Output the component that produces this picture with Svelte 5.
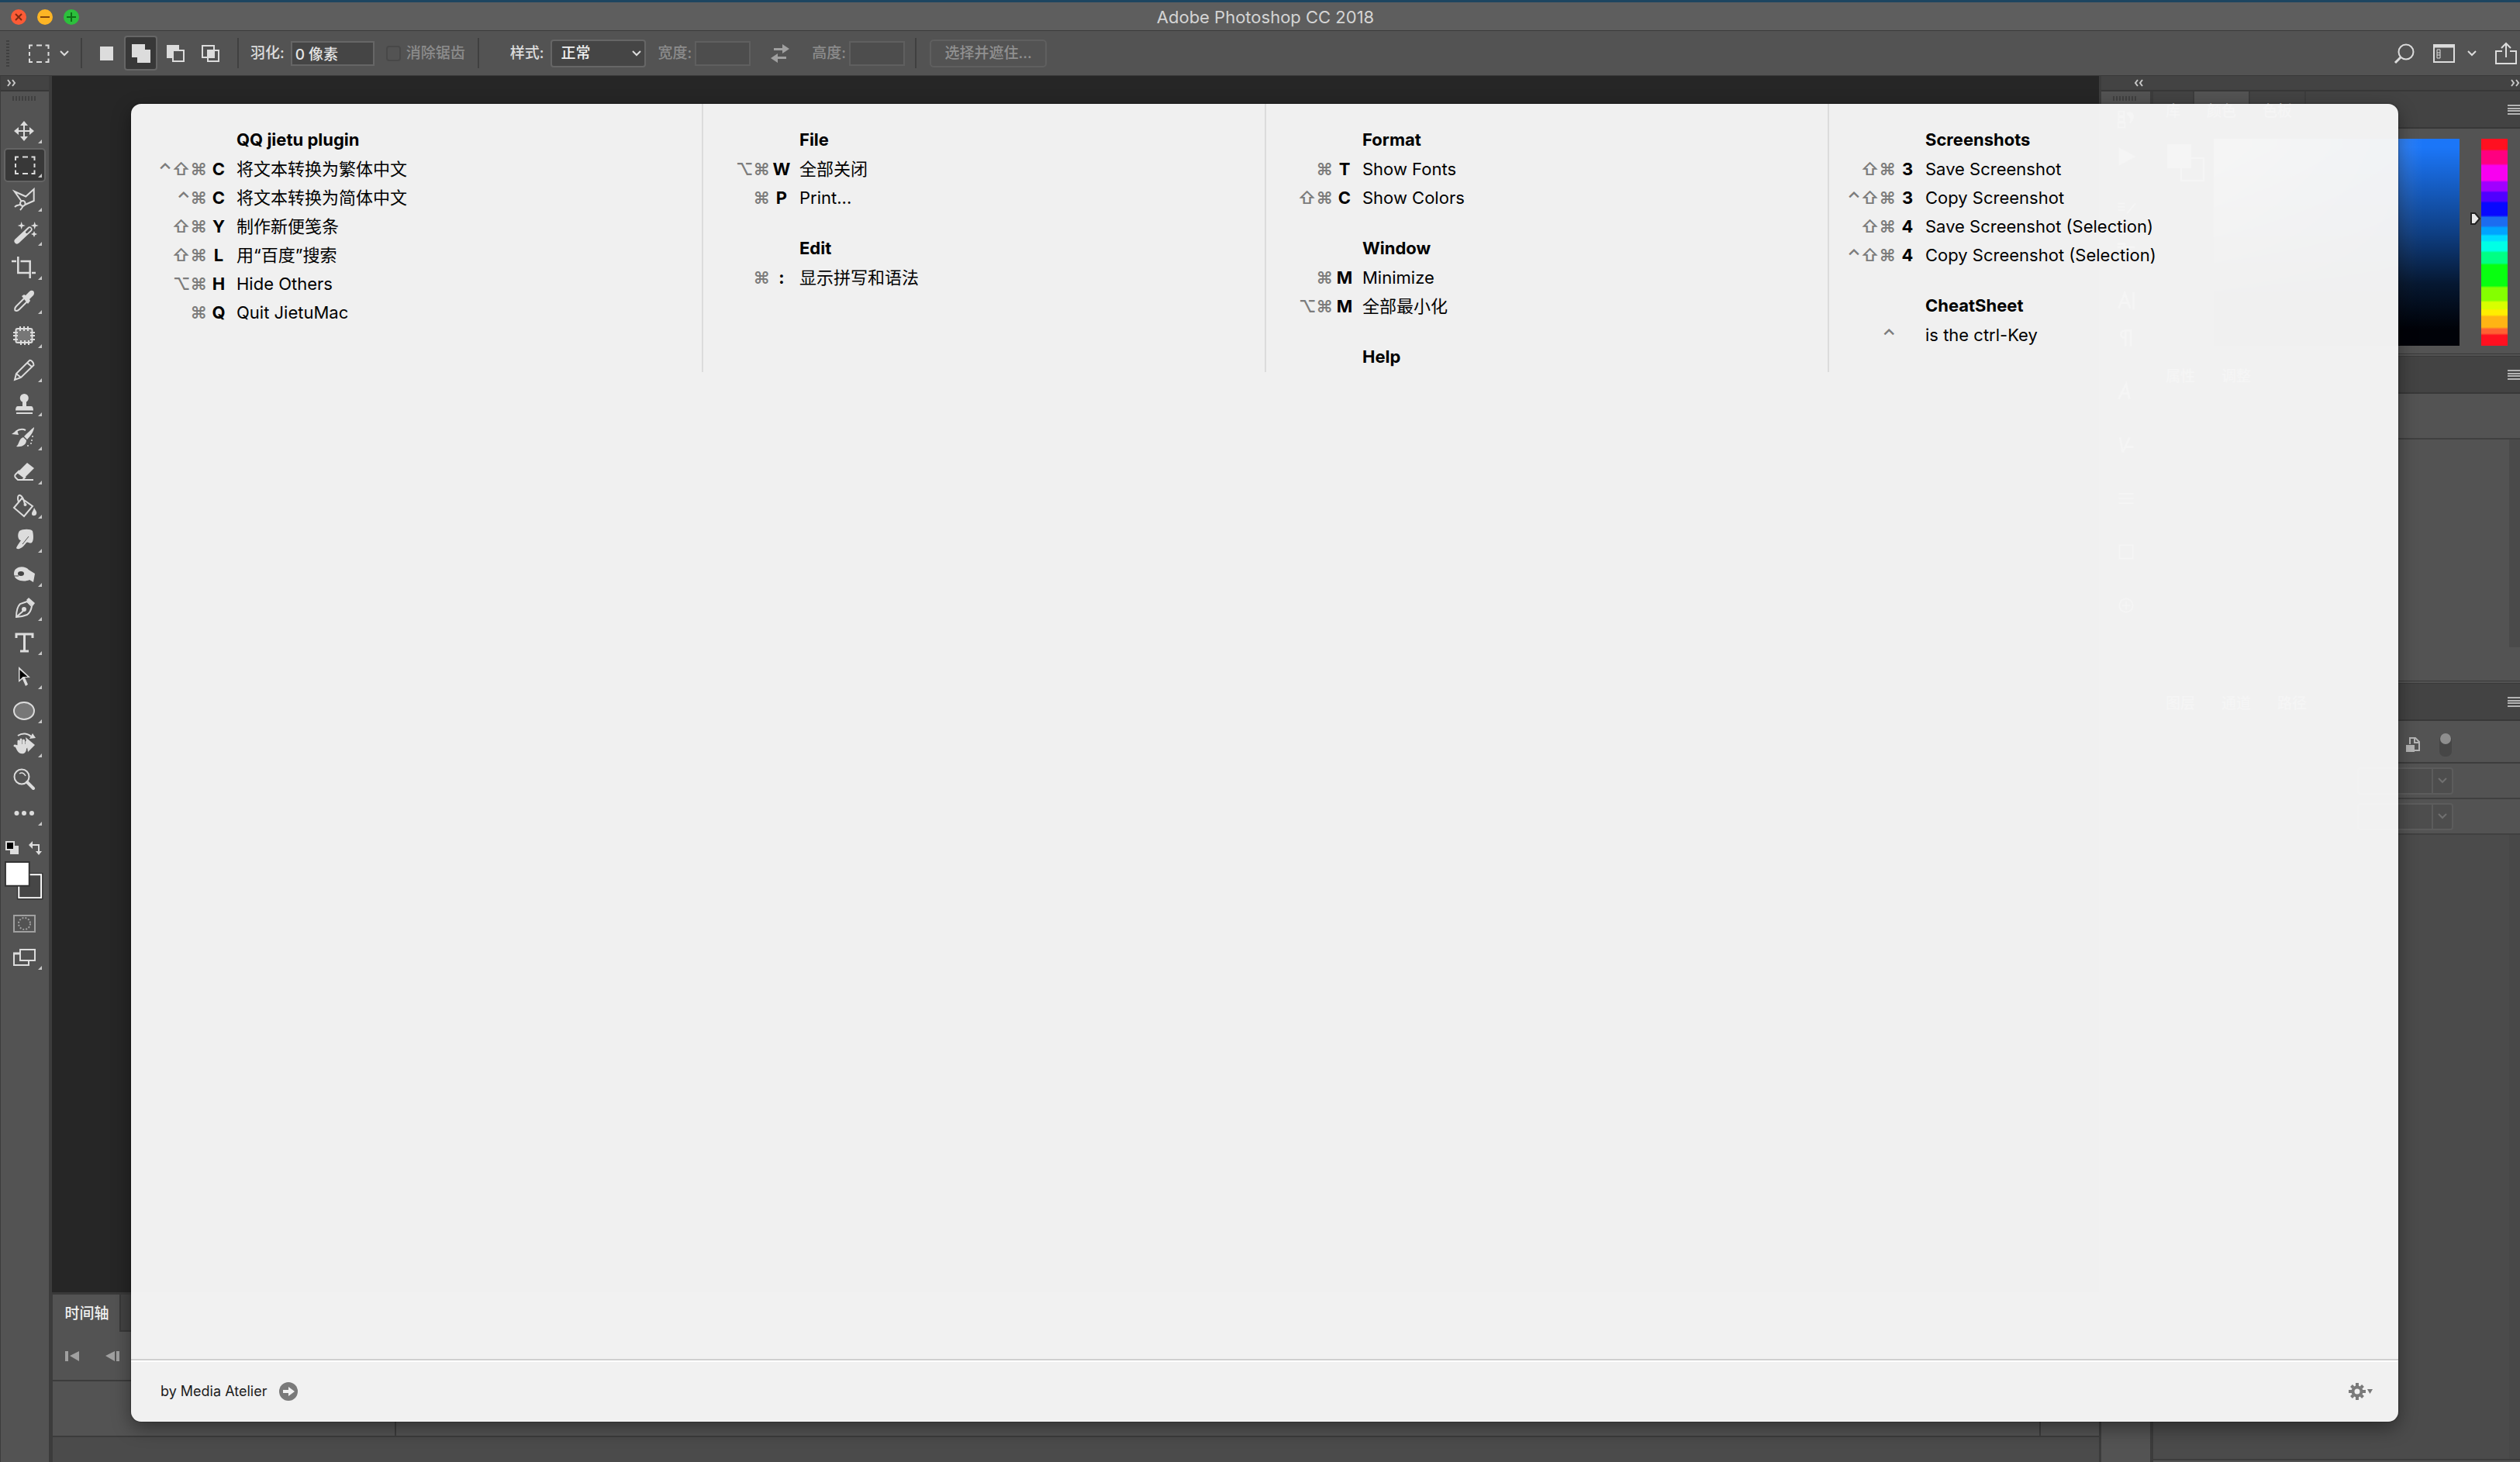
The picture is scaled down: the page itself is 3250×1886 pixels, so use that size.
<script>
    // shortcut columns of the cheat sheet
    const columns = [
        [
            {
                title: 'QQ jietu plugin',
                items: [
                    { mods: '⌃⇧⌘', key: 'C', label: '将文本转换为繁体中文' },
                    { mods: '⌃⌘', key: 'C', label: '将文本转换为简体中文' },
                    { mods: '⇧⌘', key: 'Y', label: '制作新便笺条' },
                    { mods: '⇧⌘', key: 'L', label: '用“百度”搜索' },
                    { mods: '⌥⌘', key: 'H', label: 'Hide Others' },
                    { mods: '⌘', key: 'Q', label: 'Quit JietuMac' }
                ]
            }
        ],
        [
            {
                title: 'File',
                items: [
                    { mods: '⌥⌘', key: 'W', label: '全部关闭' },
                    { mods: '⌘', key: 'P', label: 'Print...' }
                ]
            },
            {
                title: 'Edit',
                items: [{ mods: '⌘', key: ':', label: '显示拼写和语法' }]
            }
        ],
        [
            {
                title: 'Format',
                items: [
                    { mods: '⌘', key: 'T', label: 'Show Fonts' },
                    { mods: '⇧⌘', key: 'C', label: 'Show Colors' }
                ]
            },
            {
                title: 'Window',
                items: [
                    { mods: '⌘', key: 'M', label: 'Minimize' },
                    { mods: '⌥⌘', key: 'M', label: '全部最小化' }
                ]
            },
            { title: 'Help', items: [] }
        ],
        [
            {
                title: 'Screenshots',
                items: [
                    { mods: '⇧⌘', key: '3', label: 'Save Screenshot' },
                    { mods: '⌃⇧⌘', key: '3', label: 'Copy Screenshot' },
                    { mods: '⇧⌘', key: '4', label: 'Save Screenshot (Selection)' },
                    { mods: '⌃⇧⌘', key: '4', label: 'Copy Screenshot (Selection)' }
                ]
            },
            {
                title: 'CheatSheet',
                items: [{ mods: '⌃', key: '', label: 'is the ctrl-Key' }]
            }
        ]
    ];

    // left toolbar, drawn on a 30x30 grid
    const star = (x, y, r) =>
        `<path stroke="none" fill="#dcdcdc" d="M${x} ${y - r}l1.2 ${r - 1.2} ${r - 1.2} 1.2 ${1.2 - r} 1.2-1.2 ${r - 1.2}-1.2 ${1.2 - r} ${1.2 - r}-1.2 ${r - 1.2}-1.2z"/>`;

    const tools = [
        { name: '移动', icon: '<path d="M15 5v20M5 15h20"/><g fill="#dcdcdc" stroke="none"><path d="M15 2l5 6H10zM15 28l5-6H10zM2 15l6-5v10zM28 15l-6-5v10z"/></g>' },
        { name: '矩形选框', active: true, icon: '<path d="M3 9V4.500h4M12 4.500h7M23.500 4.500h4V9M27.500 13v5M27.500 21.500V26h-4M19 26h-7M7 26H3v-4.500M3 18v-5"/>' },
        { name: '多边形套索', icon: '<path d="M12 18L2.700 5l14.600 6.500L27.700 2v15L16.500 22"/><circle cx="13.300" cy="20.400" r="3.300"/><path d="M11 21c-2 3-4 0-8 4M14 23c-1 3-2 4-4 6"/>' },
        { name: '魔棒', icon: '<path d="M6 25L22 10" stroke-width="7" stroke-linecap="round"/><path d="M18.500 13.500L22.500 9.700" stroke="#535353" stroke-width="3" stroke-linecap="round"/>' + star(11.7, 5, 5) + star(28.7, 5, 5) + star(28, 16, 4) },
        { name: '裁剪', icon: '<path d="M-1 7h6M7.300 1v21H23M10.500 7h12.200v22M25 22h5" stroke-width="2.500"/>' },
        { name: '吸管', icon: '<path d="M15 11L5 21c-2 2-2 4-1.500 5.500C5 27.500 7 27 9 25l10-10"/><path d="M12 8l3-2 2 1 5-5c2-2 6-2 6 2 0 2-1 3-2 4l-4 4 1 2-3 4z" fill="#dcdcdc" stroke="none"/>' },
        { name: '修补', icon: '<rect x="4.500" y="6" width="21" height="18" rx="2" fill="#777"/><path d="M10 3v6M15 3v6M20 3v6M11 21v6M16 21v6M21 21v6M1 11h6M1 15h6M1 20h6M23 11h6M23 15h6M23 20h6"/>' },
        { name: '铅笔', icon: '<path d="M3 28l2-8L22 3c2-1 6 3 5.500 6L11 25zM5 20l6 5M19 6l6 5"/>' },
        { name: '仿制图章', icon: '<g fill="#dcdcdc" stroke="none"><circle cx="15.300" cy="7.500" r="5.500"/><path d="M13 11h5v7h6c2 0 3 2 3 5.500H4C4 20 5 18 7 18h6z"/></g><path d="M5 27h21"/>' },
        { name: '历史记录画笔', icon: '<g fill="#dcdcdc" stroke="none"><path d="M28 1c0 5-5 12-9 16l-4-4C19 9 24 4 28 1zM14 14l4 4c0 6-6 9-13 8 4-3 3-10 9-12zM-1 10l7-5 2 6z"/><circle cx="26" cy="13" r="1"/><circle cx="25" cy="18" r="1"/><circle cx="24" cy="22" r="1"/><circle cx="20" cy="25" r="1"/></g><path d="M4 7c4-3 9-4 13-2"/>' },
        { name: '橡皮擦', icon: '<path d="M19 3l9 7-13 13-9-7z" fill="#dcdcdc" stroke="none"/><path d="M9 13l-5 5c-1 1-1 3 0 4l3 3h6l4-4M9 25h18"/>' },
        { name: '油漆桶', icon: '<path d="M12 5l14 10-11 13L2 17zM8 10C6 5 7 0 10 1s5 7 6 11"/><path d="M28 17c2 4 4 5 3 8s-6 3-6 0 2-4 3-8z" fill="#dcdcdc" stroke="none"/><circle cx="16.500" cy="13" r="2" fill="#dcdcdc" stroke="none"/>' },
        { name: '涂抹', icon: '<path d="M9 3c4-3 15-3 17 0 1 4 2 12-1 15-3 2-5-2-7 0-3 4-7 9-12 8-2-1 0-3 1-5l4-6c-4 0-5-8-2-12z" fill="#dcdcdc" stroke="none"/><path d="M21 10l-8 10" stroke="#535353" stroke-width="1"/>' },
        { name: '海绵', icon: '<path d="M2 14C2 4 16 3 21 9l8 5-2 11-5-3c-6 3-20 2-20-8z" fill="#dcdcdc" stroke="none"/><ellipse cx="11" cy="14" rx="4" ry="3" fill="#444" stroke="none"/><path d="M2 17h6" stroke="#444" stroke-width="1"/>' },
        { name: '钢笔', icon: '<path d="M5 26C5 18 7 12 10 9l9-3 6 6c-1 6-3 9-6 11-5 2-9 3-14 3zM5 26l9-8"/><circle cx="15" cy="16" r="2" fill="#dcdcdc"/><path d="M18 4l3-3 8 7-3 4z" fill="#dcdcdc" stroke="none"/>' },
        { name: '横排文字', icon: '<path d="M5 9V4h21v5M15.500 4v22M10 26h11" stroke-width="3"/>' },
        { name: '路径选择', icon: '<path d="M8 2v20l5-4 4 9 3-2-4-9h7z" fill="#dcdcdc" stroke="none"/><path d="M9.500 6v13l4-4h6z" fill="#000" stroke="none"/>' },
        { name: '椭圆', icon: '<ellipse cx="15" cy="15" rx="13" ry="11" fill="#777"/>' },
        { name: '旋转视图', icon: '<path d="M7 3c6-4 13-3 17 1"/><path d="M22 7l8-1-4-6zM17 5l12 10-9 9z" fill="#dcdcdc" stroke="none"/><path d="M3 16c3 0 4 2 5 2V10M11 17V8M14.500 17V9M18 18v-7" stroke-width="3" stroke-linecap="round"/><path d="M3 16l5 3V14h10v6c0 8-9 8-12 2z" fill="#dcdcdc" stroke="none"/>' },
        { name: '缩放', plain: true, icon: '<circle cx="12" cy="12" r="9.500"/><path d="M9 8c3-2 6-1 8 3" stroke-width="1.500"/><path d="M19 19l8 8" stroke-width="4" stroke-linecap="round"/>' },
        { name: '编辑工具栏', icon: '<g fill="#dcdcdc" stroke="none"><circle cx="5.500" cy="15" r="3"/><circle cx="15" cy="15" r="3"/><circle cx="25" cy="15" r="3"/></g>' }
    ];

    const selectModes = [
        { name: '新选区', icon: '<rect x="4" y="3" width="17" height="18" fill="#dcdcdc" stroke="none"/>' },
        { name: '添加到选区', active: true, icon: '<path d="M0 0h17v7h7v17H7v-7H0z" fill="#dcdcdc" stroke="none"/>' },
        { name: '从选区减去', icon: '<path d="M0 1h16v6H7v11H0z" fill="#dcdcdc" stroke="none"/><rect x="8" y="8" width="14" height="14"/>' },
        { name: '与选区交叉', icon: '<rect x="1" y="2" width="15" height="15"/><rect x="8" y="8" width="14" height="14"/><rect x="8" y="8" width="8" height="9" fill="#dcdcdc"/>' }
    ];

    // collapsed panel icons between canvas and panels
    const dockIcons = [
        '<path d="M4 3h8v7H4zM4 12h8v6H4zM3 20h10v7H3z"/><path d="M17 6c8-4 12 6 4 14 3-8 0-8-4-14z" fill="#fff"/>',
        '<path d="M5 3l22 12L5 27z" fill="#fff"/>',
        '<path d="M3 5h10M3 10h10M3 15h10M16 20L29 5"/>',
        '<path d="M2 10h12M2 15h26M12 8v6" stroke-width="3"/>',
        '<path d="M4 26L13 4l8 22M8 18h10M26 2v26" stroke-width="3"/>',
        '<path d="M14 27V4h8v23M14 4c-9 0-9 11 0 11z" stroke-width="3"/>',
        '<path d="M4 26L15 4l5 22M8 18h10" stroke-width="3"/>',
        '<path d="M6 4l4 22M20 4L10 26M14 18h12" stroke-width="3"/>',
        '<path d="M4 8h22M4 15h22M4 22h22"/>',
        '<rect x="5" y="5" width="20" height="20"/>',
        '<circle cx="15" cy="15" r="10"/><path d="M15 9v12M9 15h12"/>'
    ];

    let feather = '0 像素';
    let antialias = false;
</script>

{#snippet chevron()}
    <svg class="chev" viewBox="0 0 12 8" fill="none" stroke="currentColor" stroke-width="2"><path d="M1 1l5 5 5-5" /></svg>
{/snippet}

{#snippet menuIcon()}
    <button class="menu" aria-label="面板菜单">
        <svg width="16" height="13" viewBox="0 0 16 13" stroke="#b4b4b4" stroke-width="2"><path d="M0 1h16M0 5h16M0 8h16M0 12h16" /></svg>
    </button>
{/snippet}

<div class="app">
    <header class="titlebar">
        <div class="lights">
            <button class="light red" aria-label="关闭"><svg viewBox="0 0 20 20"><path d="M6 6l8 8M14 6l-8 8" /></svg></button>
            <button class="light yellow" aria-label="最小化"><svg viewBox="0 0 20 20"><path d="M4 10h12" /></svg></button>
            <button class="light green" aria-label="缩放窗口"><svg viewBox="0 0 20 20"><path d="M4 10h12M10 4v12" /></svg></button>
        </div>
        <h1>Adobe Photoshop CC 2018</h1>
    </header>

    <!-- options bar -->
    <div class="options">
        <span class="grip"></span>
        <button class="preset" aria-label="工具预设">
            <svg width="30" height="30" viewBox="0 0 30 30" fill="none" stroke="#dcdcdc" stroke-width="2">{@html tools[1].icon}</svg>
            {@render chevron()}
        </button>
        <span class="sep"></span>
        <div class="modes">
            {#each selectModes as mode}
                <button class="mode" class:on={mode.active} aria-label={mode.name}>
                    <svg width="24" height="24" viewBox="0 0 24 24" fill="none" stroke="#dcdcdc" stroke-width="2">{@html mode.icon}</svg>
                </button>
            {/each}
        </div>
        <span class="sep"></span>
        <label class="feather">羽化:<input type="text" bind:value={feather} /></label>
        <label class="check dim"><input type="checkbox" bind:checked={antialias} disabled />消除锯齿</label>
        <span class="sep"></span>
        <label class="style">样式:
            <span class="pick">
                <select>
                    <option>正常</option>
                </select>
                {@render chevron()}
            </span>
        </label>
        <label class="size dim">宽度:<input type="text" disabled /></label>
        <button class="swap" aria-label="互换">
            <svg width="24" height="24" viewBox="0 0 24 24" fill="#a0a0a0"><path d="M4 5h11V0l9 6-9 6V8H4zM20 16H9v-4l-9 6 9 6v-5h11z" /></svg>
        </button>
        <label class="size dim">高度:<input type="text" disabled /></label>
        <span class="sep"></span>
        <button class="mask" disabled>选择并遮住...</button>
        <div class="actions">
            <button aria-label="搜索">
                <svg width="26" height="26" viewBox="0 0 26 26" fill="none" stroke="#dcdcdc" stroke-width="2"><circle cx="15" cy="11" r="9.500" /><path d="M8 18l-7 7" stroke-width="3" /></svg>
            </button>
            <button class="space" aria-label="工作区">
                <svg width="28" height="24" viewBox="0 0 28 24" fill="none" stroke="#dcdcdc" stroke-width="2"><path d="M1 1h26v22H1z" /><path d="M1 3h26" stroke-width="3" /><path d="M5 7h4v11H5zM5 11h4M5 14h4" stroke-width="1" /></svg>
                {@render chevron()}
            </button>
            <button aria-label="共享">
                <svg width="28" height="30" viewBox="0 0 28 30" fill="none" stroke="#dcdcdc" stroke-width="2"><path d="M9 12H1v16h26V12h-8M14 20V2M8 8l6-6 6 6" /></svg>
            </button>
        </div>
    </div>

    <div class="work">
        <!-- tools -->
        <aside class="tools">
            <div class="bar">
                <svg width="12" height="8" viewBox="0 0 12 8" fill="none" stroke="#c8c8c8" stroke-width="2"><path d="M1 0l3 4-3 4M7 0l3 4-3 4" /></svg>
            </div>
            <span class="griph"></span>
            <div class="toollist">
                {#each tools as tool}
                    <button class="tool" class:on={tool.active} aria-label={tool.name}>
                        <svg width="30" height="30" viewBox="0 0 30 30" fill="none" stroke="#dcdcdc" stroke-width="2">{@html tool.icon}</svg>
                        {#if !tool.plain}<i class="more"></i>{/if}
                    </button>
                {/each}
            </div>
            <div class="minis">
                <button aria-label="默认颜色">
                    <svg width="18" height="18" viewBox="0 0 18 18"><path d="M6 6h11v11H6z" fill="#dcdcdc" /><path d="M1 1h10v10H1z" fill="#000" stroke="#dcdcdc" stroke-width="2" /></svg>
                </button>
                <button aria-label="切换颜色">
                    <svg width="17" height="18" viewBox="0 0 17 18" fill="#dcdcdc"><path d="M0 5l5-5v4h9v9h3l-4 5-4-5h3V6H5v4z" /></svg>
                </button>
            </div>
            <button class="swatches" aria-label="前景色和背景色">
                <svg width="50" height="50" viewBox="0 0 52 52"><path d="M18.500 17.500h31v32h-31z" fill="#464646" stroke="#333" stroke-width="4" /><path d="M19 18h30v31H19z" fill="#464646" stroke="#fff" stroke-width="2" /><path d="M1 1h32v32H1z" fill="#fff" stroke="#333" stroke-width="2" /></svg>
            </button>
            <button class="tool" aria-label="快速蒙版">
                <svg width="30" height="30" viewBox="0 0 30 30" fill="none" stroke="#a0a0a0" stroke-width="2"><path d="M2 5h27v21H2z" /><circle cx="15.500" cy="15.500" r="7.500" stroke-dasharray="2 2" /></svg>
            </button>
            <button class="tool" aria-label="屏幕模式">
                <svg width="30" height="30" viewBox="0 0 30 30" fill="none" stroke="#dcdcdc" stroke-width="2"><path d="M10 10H2v15h19v-5" /><path d="M1 10h9" stroke-width="3" /><path d="M10 5h19v14H10z" /></svg>
                <i class="more"></i>
            </button>
        </aside>

        <main class="center">
            <div class="canvas"></div>
            <section class="timeline">
                <div class="tlhead"><button class="tltab">时间轴</button></div>
                <div class="tlplay">
                    <button aria-label="转到第一帧"><svg width="18" height="13" viewBox="0 0 18 13" fill="#a0a0a0"><path d="M0 0h4v13H0zM18 0v13L6 6z" /></svg></button>
                    <button aria-label="转到上一帧"><svg width="18" height="13" viewBox="0 0 18 13" fill="#a0a0a0"><path d="M14 0h4v13h-4zM12 0v13L0 6z" /></svg></button>
                </div>
                <div class="tltrack"><span class="names"></span><span class="frames"></span><span class="rest"></span></div>
                <div class="tlfoot"></div>
            </section>
        </main>

        <div class="right">
            <div class="bar rbar">
                <svg width="12" height="8" viewBox="0 0 12 8" fill="none" stroke="#c8c8c8" stroke-width="2"><path d="M5 0L2 4l3 4M11 0L8 4l3 4" /></svg>
                <svg width="12" height="8" viewBox="0 0 12 8" fill="none" stroke="#c8c8c8" stroke-width="2"><path d="M1 0l3 4-3 4M7 0l3 4-3 4" /></svg>
            </div>
            <div class="rcols">
                <div class="dock">
                    <span class="griph"></span>
                    {#each dockIcons as icon}
                        <button aria-hidden="true" tabindex="-1"><svg width="26" height="26" viewBox="0 0 30 30" fill="none" stroke="#dcdcdc" stroke-width="2">{@html icon}</svg></button>
                    {/each}
                </div>
                <div class="panels">
                    <div class="phead"><span class="tab">库</span><span class="tab on">颜色</span><span class="tab">色板</span>{@render menuIcon()}</div>
                    <div class="color">
                        <svg class="pair" width="48" height="48" viewBox="0 0 48 48"><path d="M18 18h29v29H18z" fill="none" stroke="#fff" stroke-width="2" /><path d="M0 0h31v31H0z" fill="#fff" /></svg>
                        <div class="field"></div>
                        <svg class="knob" width="15" height="18" viewBox="0 0 15 18"><path d="M2 2h5l6 7-6 7H2z" fill="#e8e8e8" stroke="#222" stroke-width="2" /></svg>
                        <div class="hue"></div>
                    </div>
                    <div class="phead"><span class="tab">属性</span><span class="tab">调整</span>{@render menuIcon()}</div>
                    <div class="adjust"></div>
                    <div class="props"><span class="scroll"></span></div>
                    <div class="phead"><span class="tab">图层</span><span class="tab">通道</span><span class="tab">路径</span>{@render menuIcon()}</div>
                    <div class="filter">
                        <svg width="18" height="20" viewBox="0 0 18 20" fill="none" stroke="#b4b4b4" stroke-width="2"><path d="M5 9V1h7l5 5v11h-6M11 1v6h6" /><path d="M0 10h11v9H0z" fill="#b4b4b4" stroke="none" /></svg>
                        <svg width="16" height="32" viewBox="0 0 16 32"><rect x="0" y="2" width="16" height="29" rx="7" fill="#464646" /><circle cx="8" cy="8" r="7" fill="#8e8e8e" /></svg>
                    </div>
                    {#each ['不透明度', '填充'] as name}
                        <div class="lrow">
                            <div class="combo"><input type="text" aria-label={name} disabled /><button aria-label={name} disabled>{@render chevron()}</button></div>
                        </div>
                    {/each}
                    <div class="layers"><span class="scroll"></span></div>
                    <div class="pfoot"></div>
                </div>
            </div>
        </div>
    </div>

    <!-- cheat sheet window over the editor -->
    <section class="sheet">
        <div class="cols">
            {#each columns as groups}
                <div class="col">
                    {#each groups as group}
                        <div class="group">
                            <h2>{group.title}</h2>
                            {#each group.items as item}
                                <div class="row">
                                    <span class="mods">{item.mods}</span>
                                    <b>{item.key}</b>
                                    <span>{item.label}</span>
                                </div>
                            {/each}
                        </div>
                    {/each}
                </div>
            {/each}
        </div>
        <footer>
            <a href="#media-atelier">by Media Atelier
                <svg width="24" height="24" viewBox="0 0 24 24"><circle cx="12" cy="12" r="12" fill="#7a7a7a" /><path d="M5 10h7V6l8 6-8 6v-4H5z" fill="#f2f2f2" /></svg>
            </a>
            <button class="gear" aria-label="设置">
                <svg width="32" height="24" viewBox="0 0 32 24">
                    <g fill="none" stroke="#7a7a7a"><circle cx="11" cy="12" r="5.500" stroke-width="4" /><path stroke-width="4" d="M11 1v4M11 19v4M0 12h4M18 12h4M3.500 4.500l2.500 2.500M16 17l2.500 2.500M18.500 4.500L16 7M6 17l-2.500 2.500" /></g>
                    <path d="M24 9h7l-3.500 6z" fill="#7a7a7a" />
                </svg>
            </button>
        </footer>
    </section>
</div>

<style>
    :global(body) {
        background: #535353;
    }

    .app {
        position: relative;
        display: flex;
        flex-direction: column;
        height: 100vh;
        overflow: hidden;
        box-sizing: border-box;
        border-top: 3px solid #1d4560;
        background: #535353;
        color: #dcdcdc;
        font-family: Inter, "Noto Sans CJK SC", sans-serif;
        font-size: 19px;
        font-weight: 500;
        line-height: 24px;
    }

    .app * {
        box-sizing: border-box;
    }

    svg {
        display: block;
        overflow: visible;
        flex: none;
    }

    button {
        display: flex;
        align-items: center;
        justify-content: center;
        flex: none;
        margin: 0;
        padding: 0;
        border: 0;
        background: none;
        color: inherit;
        font: inherit;
    }

    input,
    select {
        margin: 0;
        color: #e6e6e6;
        font: inherit;
    }

    .chev {
        width: 12px;
        height: 8px;
    }

    /* title bar */
    .titlebar {
        display: grid;
        grid-template-columns: 1fr auto 1fr;
        align-items: center;
        height: 37px;
        flex: none;
        padding: 2px 0 0 14px;
        border-bottom: 1px solid #3a3a3a;
        background: #5e5e5e;
    }

    .titlebar h1 {
        margin: 0;
        font-size: 22px;
        font-weight: 400;
        color: #d4d4d4;
    }

    .lights {
        display: flex;
        gap: 14px;
    }

    .light {
        width: 20px;
        height: 20px;
        border-radius: 50%;
    }

    .light svg {
        width: 20px;
        height: 20px;
        stroke: #4d1500;
        stroke-width: 2;
        opacity: 0.7;
    }

    .red { background: #fc5b36; }
    .yellow { background: #fdb525; }
    .green { background: #2cc03c; }
    .green svg { stroke: #004d08; }

    /* options bar */
    .options {
        display: flex;
        align-items: center;
        height: 58px;
        flex: none;
        border-bottom: 1px solid #393939;
    }

    .grip {
        width: 4px;
        height: 34px;
        margin: 0 23px 0 8px;
        background: repeating-linear-gradient(#404040 0 2px, transparent 2px 4px);
    }

    .preset {
        gap: 12px;
        margin-right: 15px;
    }

    .sep {
        width: 2px;
        height: 39px;
        flex: none;
        background: #404040;
    }

    .modes {
        display: flex;
        gap: 2px;
        margin: 0 13px 0 9px;
    }

    .mode {
        width: 43px;
        height: 45px;
        border: 2px solid transparent;
        border-radius: 4px;
    }

    .mode.on {
        border-color: #666;
        background: #383838;
    }

    .options label {
        display: flex;
        align-items: center;
        white-space: nowrap;
    }

    .options input[type="text"] {
        width: 72px;
        height: 32px;
        margin-left: 4px;
        padding: 0 4px;
        border: 2px solid #666;
        background: #454545;
    }

    .options .feather {
        margin: 0 15px;
    }

    .options .feather input {
        width: 108px;
        margin-left: 8px;
    }

    .options .dim {
        color: #8c8c8c;
    }

    .options .dim input[type="text"] {
        border-color: #5f5f5f;
        background: #4d4d4d;
    }

    .options .check {
        gap: 7px;
        margin-right: 16px;
    }

    .check input {
        appearance: none;
        width: 19px;
        height: 20px;
        border: 2px solid #484848;
        border-radius: 4px;
    }

    .style {
        gap: 8px;
        margin: 0 16px 0 40px;
    }

    .pick {
        position: relative;
        display: flex;
        align-items: center;
    }

    .pick select {
        appearance: none;
        width: 123px;
        height: 36px;
        padding: 0 12px;
        border: 2px solid #666;
        border-radius: 4px;
        background: #454545;
        color: #f0f0f0;
    }

    .pick .chev {
        position: absolute;
        right: 6px;
        pointer-events: none;
    }

    .swap {
        margin: 0 29px 0 26px;
    }

    .size + .sep {
        margin-left: 13px;
    }

    .mask {
        width: 151px;
        height: 36px;
        margin-left: 17px;
        border: 2px solid #5f5f5f;
        border-radius: 5px;
        color: #909090;
    }

    .actions {
        display: flex;
        align-items: center;
        gap: 24px;
        margin-left: auto;
        padding-right: 4px;
    }

    .space {
        gap: 16px;
    }

    .work {
        display: flex;
        flex: 1;
        min-height: 0;
    }

    /* toolbar */
    .tools {
        display: flex;
        flex-direction: column;
        width: 67px;
        flex: none;
        border-right: 4px solid #3c3c3c;
        border-left: 1px solid #3c3c3c;
    }

    .bar {
        display: flex;
        align-items: center;
        height: 20px;
        flex: none;
        padding-left: 8px;
        border-bottom: 2px solid #383838;
        background: #434343;
    }

    .griph {
        width: 32px;
        height: 6px;
        flex: none;
        margin: 6px 0 0 15px;
        background: repeating-linear-gradient(90deg, #404040 0 2px, transparent 2px 4px);
    }

    .toollist {
        padding-top: 17px;
    }

    .tool {
        position: relative;
        width: 60px;
        height: 44px;
        border: 2px solid transparent;
        border-radius: 5px;
    }

    .tool.on {
        width: 54px;
        margin-left: 4px;
        border-color: #646464;
        background: #383838;
    }

    .tool.on .more {
        right: 3px;
    }

    .more {
        position: absolute;
        right: 5px;
        bottom: 4px;
        border-bottom: 5px solid #c8c8c8;
        border-left: 5px solid transparent;
    }

    .minis {
        display: flex;
        gap: 12px;
        padding: 14px 0 8px 6px;
    }

    .swatches {
        align-self: flex-start;
        margin: 0 0 8px 5px;
    }

    /* canvas and timeline */
    .center {
        display: flex;
        flex-direction: column;
        flex: 1;
        min-width: 0;
    }

    .canvas {
        flex: 1;
        background: #262626;
    }

    .timeline {
        display: flex;
        flex-direction: column;
        height: 219px;
        border-top: 3px solid #393939;
        border-left: 1px solid #3c3c3c;
    }

    .tlhead {
        display: flex;
        height: 48px;
        background: linear-gradient(#434343 0 46px, #393939 46px);
    }

    .tltab {
        width: 88px;
        padding: 2px 0 0 2px;
        border-right: 2px solid #393939;
        background: #535353;
        color: #f0f0f0;
    }

    .tlplay {
        display: flex;
        align-items: center;
        gap: 34px;
        height: 64px;
        padding-left: 16px;
        border-bottom: 2px solid #3c3c3c;
    }

    .tltrack {
        display: flex;
        height: 72px;
        border-bottom: 2px solid #3c3c3c;
    }

    .names {
        width: 443px;
        border-right: 2px solid #3c3c3c;
    }

    .frames {
        flex: 1;
        border-right: 2px solid #3c3c3c;
    }

    .rest {
        width: 75px;
    }

    .tlfoot {
        flex: 1;
        background: #4b4b4b;
    }

    /* right side */
    .right {
        display: flex;
        flex-direction: column;
        width: 543px;
        flex: none;
        border-left: 3px solid #3c3c3c;
    }

    .rbar {
        justify-content: space-between;
        padding-left: 42px;
    }

    .rcols {
        display: flex;
        flex: 1;
        min-height: 0;
    }

    .dock {
        display: flex;
        flex-direction: column;
        width: 67px;
        flex: none;
        border-right: 4px solid #3c3c3c;
    }

    .dock button {
        height: 48px;
    }

    .dock button:nth-of-type(2n + 3),
    .dock button:nth-of-type(n + 8) {
        margin-top: 21px;
    }

    .panels {
        display: flex;
        flex-direction: column;
        flex: 1;
    }

    .phead {
        display: flex;
        height: 48px;
        flex: none;
        border-bottom: 2px solid #383838;
        background: #434343;
    }

    .tab {
        padding: 14px 16px 0;
        border-right: 2px solid #3c3c3c;
    }

    .tab.on {
        background: #535353;
    }

    .menu {
        align-self: center;
        margin-left: auto;
    }

    .color {
        display: flex;
        height: 294px;
        flex: none;
        padding: 13px 16px 0 18px;
        border-bottom: 4px double #393939;
    }

    .pair {
        margin: 7px 12px 0 0;
    }

    .field {
        flex: 1;
        height: 267px;
        background:
            linear-gradient(transparent 4%, rgba(0, 0, 0, 0.48) 46%, rgba(0, 0, 0, 0.8) 70%, #000208 92%),
            linear-gradient(90deg, #fff, #1b76f8 85%);
    }

    .knob {
        margin: 94px 0 0 13px;
    }

    .hue {
        width: 34px;
        height: 267px;
        background: linear-gradient(#ff1020 0 5%, #ff0080 6% 12%, #f800f0 13% 20%, #a000ff 21% 25%, #5000ff 26% 30%, #0808ff 31% 37%, #1c6cf0 38% 42%, #00a4ff 43% 46%, #00dcff 47% 49%, #00ffe6 50% 54%, #00ff84 55% 60%, #08ff10 61% 71%, #84ff00 72% 78%, #d8ff00 79% 82%, #ffee00 83% 85%, #ffb414 86% 91%, #ff6032 92% 94%, #ff1020 95%);
    }

    .adjust {
        height: 59px;
        flex: none;
        border-bottom: 2px solid #404040;
    }

    .props {
        height: 315px;
        flex: none;
        border-bottom: 4px double #393939;
    }

    .scroll {
        display: block;
        width: 14px;
        height: 268px;
        margin-left: auto;
        background: #4a4a4a;
    }

    .filter {
        display: flex;
        align-items: center;
        justify-content: flex-end;
        gap: 25px;
        height: 55px;
        flex: none;
        padding: 8px 88px 0 0;
        border-bottom: 2px solid #3c3c3c;
    }

    .lrow {
        display: flex;
        align-items: center;
        justify-content: flex-end;
        height: 46px;
        flex: none;
        padding-right: 86px;
        border-bottom: 2px solid #404040;
    }

    .combo {
        display: flex;
        height: 35px;
        border: 2px solid #5c5c5c;
        border-radius: 4px;
        background: #4d4d4d;
        color: #707070;
    }

    .combo input {
        width: 96px;
        border: 0;
        border-right: 2px solid #5c5c5c;
        background: none;
    }

    .combo button {
        width: 24px;
    }

    .layers {
        flex: 1;
        background: #4b4b4b;
    }

    .layers .scroll {
        height: 100%;
        background: #484848;
    }

    .pfoot {
        height: 4px;
        border-top: 2px solid #3c3c3c;
    }

    /* cheat sheet */
    .sheet {
        position: absolute;
        top: 131px;
        right: 157px;
        bottom: 52px;
        left: 169px;
        display: flex;
        flex-direction: column;
        border-radius: 13px;
        background: rgba(245, 245, 245, 0.98);
        box-shadow: 0 8px 24px rgba(0, 0, 0, 0.4), 0 0 2px rgba(0, 0, 0, 0.6);
        color: #000;
        font-size: 22px;
        font-weight: 400;
        line-height: 37px;
    }

    .cols {
        display: grid;
        grid-template-columns: repeat(4, 1fr);
        flex: 1;
        align-content: start;
        padding: 0 10px;
    }

    .col {
        display: flex;
        flex-direction: column;
        gap: 28px;
        padding-top: 28px;
    }

    .col + .col {
        border-left: 2px solid #dcdcdc;
    }

    h2 {
        height: 38px;
        margin: 0;
        padding-left: 126px;
        font-size: 22px;
        font-weight: 700;
    }

    .col + .col h2 {
        padding-left: 124px;
    }

    .row {
        display: grid;
        grid-template-columns: 88px 30px 1fr;
        height: 37px;
        white-space: nowrap;
    }

    .col + .col .row {
        grid-template-columns: 86px 30px 1fr;
    }

    .row span:last-child {
        padding-left: 8px;
    }

    .mods {
        color: #7c7c7c;
        font-weight: 600;
        text-align: right;
    }

    .row b {
        text-align: center;
    }

    footer {
        display: flex;
        align-items: center;
        justify-content: space-between;
        height: 81px;
        padding: 0 32px 0 38px;
        border-top: 2px solid #cfcfcf;
        box-shadow: inset 0 2px #fff;
    }

    footer a {
        display: flex;
        align-items: center;
        gap: 16px;
        color: #1c1c1c;
        font-size: 18px;
        line-height: 24px;
        text-decoration: none;
    }
</style>
